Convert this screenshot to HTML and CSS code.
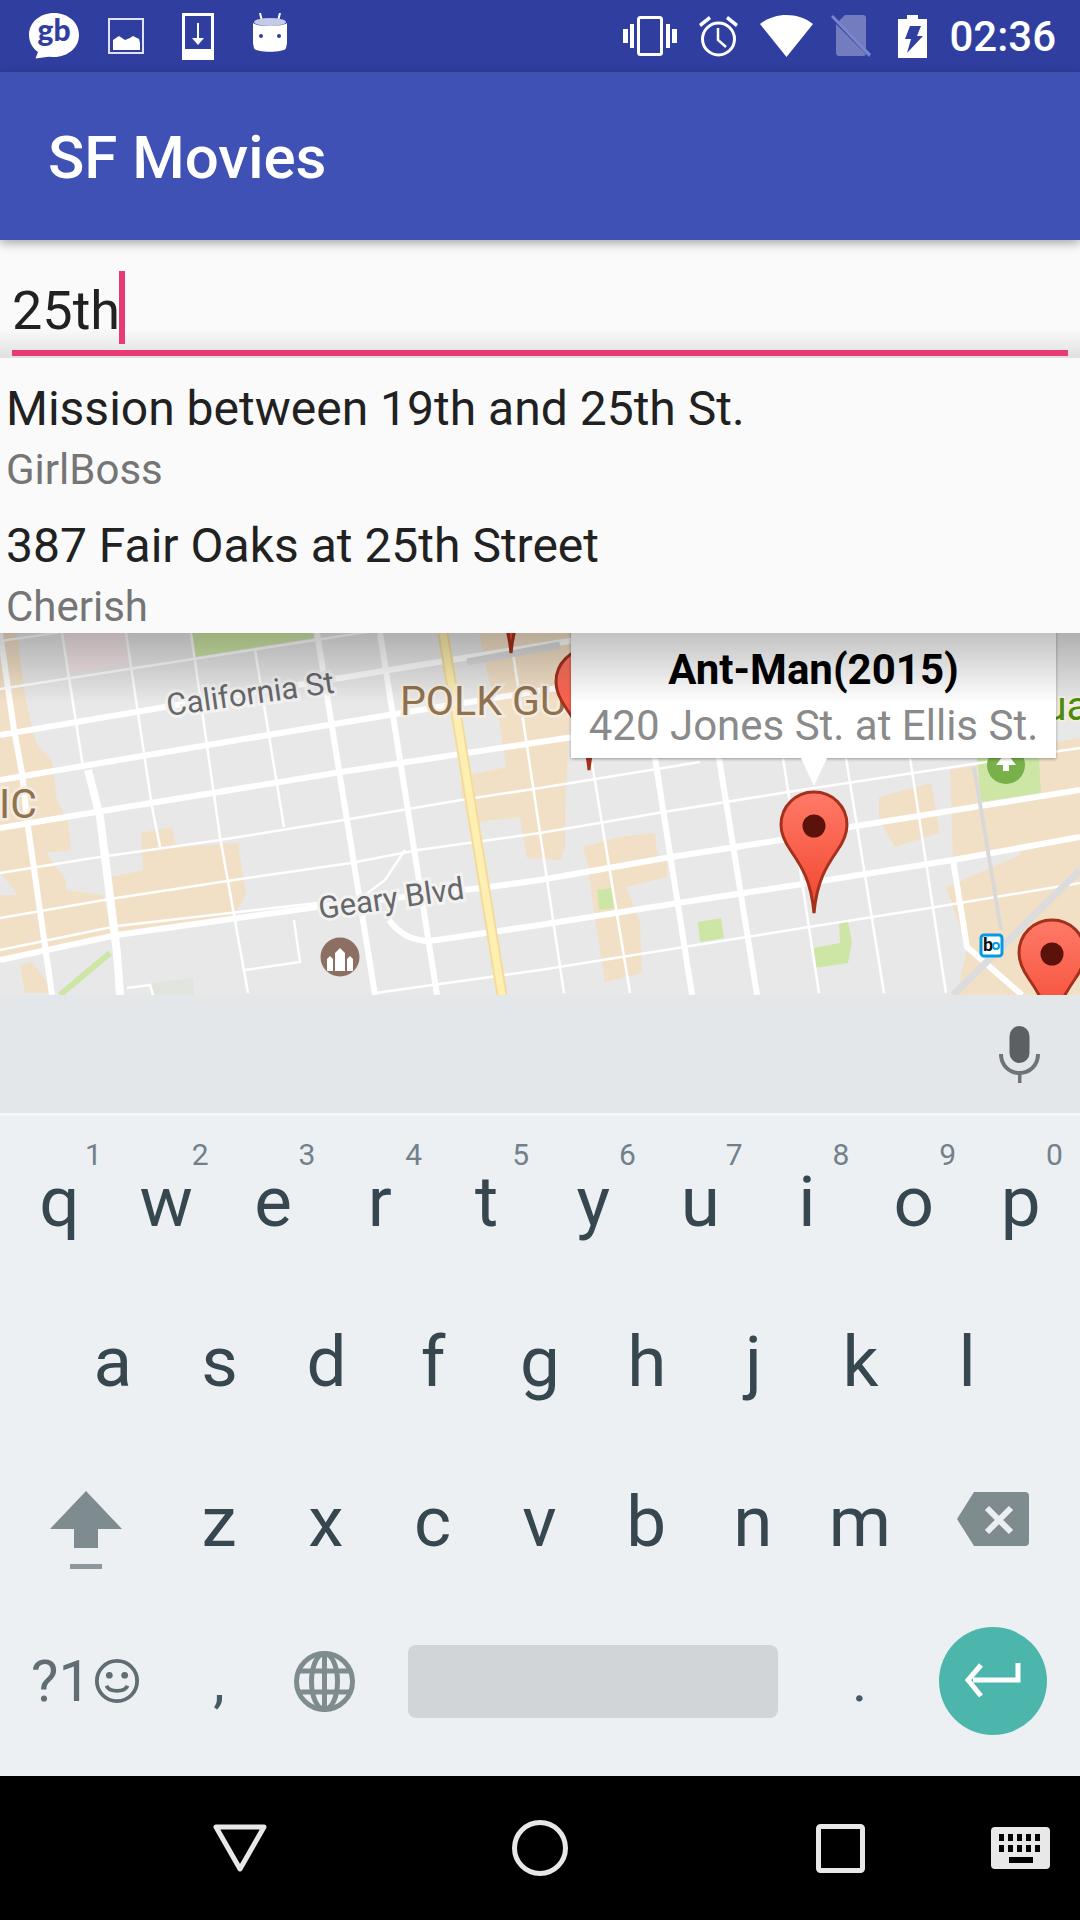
FILE: index.html
```html
<!DOCTYPE html>
<html>
	<head>
		<meta charset="utf-8">
		<title>SF Movies</title>
		<link rel="stylesheet" href="styles.css">
	</head>
	<body>
		<div class="status_bar">
			<div class="status_group">
				<svg class="ic_gb" viewBox="0 0 50 46"><path d="M25 0C11 0 0 9.500 0 22c0 7 3.500 13 9 17l-2.500 6.500C12 45 17 43.500 21 43.700c1.300.2 2.700.3 4 .3 14 0 25-9.500 25-22S39 0 25 0z" fill="#fff"/><text x="25" y="28" class="gb_text">gb</text></svg>
				<svg class="ic_pic" viewBox="0 0 36 36"><path d="M0 0h36v36H0z M2 2v32h32V2z" fill="#fff" fill-rule="evenodd" opacity=".85"/><path d="M5 32V22l6-4 6 4 5-2 3-2 6 3 1 4v7z" fill="#fff"/></svg>
				<svg class="ic_dl" viewBox="0 0 32 47"><path d="M0 0h32v47H0z M3 3v33h26V3z" fill="#fff" fill-rule="evenodd"/><path d="M15 10h2v17h-2z" fill="#fff"/><path d="M10 25h12l-6 7z" fill="#fff"/></svg>
				<svg class="ic_droid" viewBox="0 0 34 40"><path d="M7 0l2 8M27 0l-2 8" stroke="#fff" stroke-width="2" fill="none"/><ellipse cx="17" cy="9" rx="16" ry="4" fill="#c5cae9"/><path d="M0 10c4 4 30 4 34 0 1 9 1 18-1 25-1 5-31 5-32 0C-1 28-1 19 0 10z" fill="#fff"/><circle cx="8" cy="23" r="2" fill="#303f9f"/><circle cx="26" cy="23" r="2" fill="#303f9f"/></svg>
			</div>
			<div class="status_group">
				<svg class="ic_vib" viewBox="0 0 54 40"><rect x="15.500" y="1.500" width="23" height="37" rx="2" fill="none" stroke="#fff" stroke-width="3"/><path d="M0 13h5v14H0zM7 8h4v24H7zM43 8h4v24h-4zM49 13h5v14h-5z" fill="#fff"/></svg>
				<svg class="ic_alarm" viewBox="0 0 41 42"><circle cx="20.500" cy="24" r="16" fill="none" stroke="#fff" stroke-width="3"/><path d="M20 13v12l8 7" fill="none" stroke="#fff" stroke-width="2.500"/><path d="M1 9L11 1l2 3L3 12zM40 9L30 1l-2 3 10 8z" fill="#fff"/></svg>
				<svg class="ic_wifi" viewBox="0 0 53 42"><path d="M26.500 42L0 9C15 -3 38 -3 53 9z" fill="#fff"/></svg>
				<svg class="ic_sim" viewBox="0 0 40 42"><path d="M5 9v29a3 3 0 003 3h24a3 3 0 003-3V3a3 3 0 00-3-3H14z" fill="#fff" opacity=".32"/><path d="M1 3l38 38" stroke="#303f9f" stroke-width="3"/><path d="M0 2l2-2 38 39-2 3z" fill="#7986cb"/></svg>
				<svg class="ic_batt" viewBox="0 0 29 43"><path d="M9 0h11v4h9v39H0V4h9z" fill="#fff"/><path d="M12 11h11l-4 10h6L9 38l4-14H7z" fill="#303f9f"/></svg>
				<span class="clock">02:36</span>
			</div>
		</div>
		<div class="app_bar">SF Movies</div>
		<div class="search_field">
			<div class="search_line"><span>25th</span><i class="cursor"></i></div>
			<div class="underline"></div>
		</div>
		<div class="suggest">
			<div class="suggest_item">
				<div class="suggest_main">Mission between 19th and 25th St.</div>
				<div class="suggest_sub">GirlBoss</div>
			</div>
			<div class="suggest_item">
				<div class="suggest_main">387 Fair Oaks at 25th Street</div>
				<div class="suggest_sub">Cherish</div>
			</div>
		</div>
		<div class="map">
			<svg class="map_canvas" viewBox="0 633 1080 362">
				<defs>
					<linearGradient id="pin_fill" x1="0" y1="0" x2="0" y2="1">
						<stop offset="0" stop-color="#ff7a68"/>
						<stop offset="1" stop-color="#f2452d"/>
					</linearGradient>
					<g id="pin">
						<path d="M0 122C-3 90-12 76-23 60-30 50-33 43-33 34-33 15-18 1 0 1S33 15 33 34C33 43 30 50 23 60 12 76 3 90 0 122z" fill="url(#pin_fill)" stroke="#a5301c" stroke-width="3"/>
						<circle cx="0" cy="35" r="11.500" fill="#5a120a"/>
					</g>
				</defs>
				<g class="blocks">
					<path d="M0 633H17L24 690 30 720 37 745 52 760 57 800 68 822 71 850 46 853 66 880 66 890 103 895 112 935 45 950 0 958V895H18L6 880 0 872z"/>
					<path d="M0 780H5V870H0z"/>
					<path d="M141 833L172 827 176 847 238 843 246 895 234 915 117 932 110 877 143 870z"/>
					<path d="M20 965L32 962 55 993H25z"/>
					<path d="M479 633H560L600 633 570 720 562 860 527 858 520 817 479 822 461 797 461 777 506 767 499 720 486 667z"/>
					<path d="M540 745H565V850H540z"/>
					<path d="M583 847L619 837 655 833 657 853 667 862 667 877 626 887 640 922 642 973 605 982 595 920 588 867z"/>
					<path d="M879 797L931 783 939 827 939 833 895 847 879 820z"/>
					<path d="M950 770L977 765 982 802 1080 790V995H957L967 947 946 887 1020 855 1020 850 953 860z"/>
					<path d="M1039 745L1080 738V795L1041 795z"/>
				</g>
				<g class="parks">
					<path d="M190 633H313L314 638 195 657z"/>
					<path d="M977 757H1039L1041 793 981 802z"/>
					<path d="M597 890L611 888 614 908 599 910z"/>
					<path d="M698 922L721 918 724 938 700 942z"/>
					<path d="M814 948L840 943 839 922 848 922 852 942 848 963 815 968z"/>
				</g>
				<path d="M65 633H124L129 663 69 673z" fill="#f3e5e8"/>
				<path d="M152 983L193 978 194 995H152z" fill="#e2e4de"/>
				<path d="M110 953L60 995" class="green_path"/>
				<g class="thin">
					<path d="M0 641L62 632"/>
					<path d="M0 689L380 630"/>
					<path d="M0 873L93 858 220 840 344 820 461 800 540 788 700 762"/>
					<path d="M0 918L110 899 234 880 351 863 418 850 540 833 664 812 788 792 953 767 1080 748"/>
					<path d="M375 993L540 970 678 948 809 927 936 907 1080 883"/>
					<path d="M294 920L300 962 245 970"/>
					<path d="M62 633L83 767"/>
					<path d="M126 633L152 807 160 847"/>
					<path d="M191 633L220 837 248 993"/>
					<path d="M255 650L284 827"/>
					<path d="M513 653L564 993"/>
					<path d="M592 763L630 993"/>
					<path d="M783 758L819 993"/>
					<path d="M846 758L884 993"/>
					<path d="M910 758L946 993"/>
					<path d="M405 850L385 880 365 895"/>
					<path d="M127 988L150 985 153 995"/>
					<path d="M0 950L117 926 317 903"/>
				</g>
				<g class="major">
					<path d="M0 735L165 707 389 670 700 620"/>
					<path d="M0 780L148 755 389 715 700 665"/>
					<path d="M0 828L96 812 341 772 540 742 600 733"/>
					<path d="M0 960L117 935 317 907 489 887 540 880 671 857 781 840 850 827 1080 790"/>
					<path d="M389 920Q404 941 430 941L540 925 678 903 809 883 953 860 1080 837"/>
					<path d="M0 633L14 730 22 773 28 827 52 995"/>
					<path d="M317 633L375 995"/>
					<path d="M380 633L437 995"/>
					<path d="M655 758L692 995"/>
					<path d="M719 758L757 995"/>
					<path d="M953 860L967 947 1022 995"/>
				</g>
				<path d="M88 770L100 817 117 953 120 995" class="wide_road"/>
				<path d="M443 633L502 995" class="yellow_edge"/>
				<path d="M443 633L502 995" class="yellow_road"/>
				<path d="M974 767L1001 930" class="rail"/>
				<path d="M953 995L1080 870" class="rail_wide"/>
				<path d="M467 662L560 645" class="rail_wide"/>
				<text x="168" y="716" transform="rotate(-8 168 716)" class="road_label">California St</text>
				<text x="320" y="919" transform="rotate(-8 320 919)" class="road_label">Geary Blvd</text>
				<text x="400" y="715" class="area_label">POLK GUL</text>
				<text x="-1" y="818" class="area_label">IC</text>
				<text x="1044" y="720" class="park_label">ua</text>
				<use href="#pin" x="511" y="531"/>
				<use href="#pin" x="589" y="648"/>
				<circle cx="1006" cy="765" r="19" fill="#78b04a"/>
				<path d="M1006 752l10 13h-7v6h-6v-6h-7z" fill="#fff"/>
				<circle cx="340" cy="957" r="19.500" fill="#8d6e63"/>
				<path d="M327 971v-12l3-3 3 3v12zM335 971v-18l5-5 5 5v18zM347 971v-12l3-3 3 3v12z" fill="#fff"/>
				<rect x="981" y="935" width="21" height="21" rx="3" fill="#fff" stroke="#039be5" stroke-width="3"/>
				<text x="983" y="951" class="bart_label">b</text>
				<circle cx="996" cy="946" r="3" fill="none" stroke="#039be5" stroke-width="2"/>
				<use href="#pin" x="814" y="791"/>
				<use href="#pin" x="1052" y="919"/>
			</svg>
			<div class="info_win">
				<div class="info_title">Ant-Man(2015)</div>
				<div class="info_body">420 Jones St. at Ellis St.</div>
				<i class="info_tail"></i>
			</div>
			<div class="map_shade"></div>
		</div>
		<div class="keyboard">
			<div class="kb_strip">
				<svg class="ic_mic" viewBox="0 0 41 57"><rect x="10.500" y="0" width="20" height="37" rx="10" fill="#5d6063"/><path d="M2 28c0 11 8 19 18.500 19S39 39 39 28" fill="none" stroke="#6c757a" stroke-width="4"/><path d="M19 46h3.500v11H19z" fill="#6c757a"/></svg>
			</div>
			<div class="kb_rows">
				<div class="kb_row">
					<span class="key">q<sup>1</sup></span>
					<span class="key">w<sup>2</sup></span>
					<span class="key">e<sup>3</sup></span>
					<span class="key">r<sup>4</sup></span>
					<span class="key">t<sup>5</sup></span>
					<span class="key">y<sup>6</sup></span>
					<span class="key">u<sup>7</sup></span>
					<span class="key">i<sup>8</sup></span>
					<span class="key">o<sup>9</sup></span>
					<span class="key">p<sup>0</sup></span>
				</div>
				<div class="kb_row">
					<span class="key">a</span>
					<span class="key">s</span>
					<span class="key">d</span>
					<span class="key">f</span>
					<span class="key">g</span>
					<span class="key">h</span>
					<span class="key">j</span>
					<span class="key">k</span>
					<span class="key">l</span>
				</div>
				<div class="kb_row kb_row_start">
					<span class="key key_wide">
						<svg class="ic_shift" viewBox="0 0 72 78"><path d="M36 0L72 38H48V57H24V38H0z" fill="#7f8c8f"/><path d="M20 73h32v5H20z" fill="#8c999c"/></svg>
					</span>
					<span class="key">z</span>
					<span class="key">x</span>
					<span class="key">c</span>
					<span class="key">v</span>
					<span class="key">b</span>
					<span class="key">n</span>
					<span class="key">m</span>
					<span class="key key_wide">
						<svg class="ic_back" viewBox="0 0 72 54"><path d="M17 0H68a4 4 0 014 4V50a4 4 0 01-4 4H17L0 27z" fill="#7f8c8f"/><path d="M30 16l24 24M54 16L30 40" stroke="#eceff1" stroke-width="6" fill="none"/></svg>
					</span>
				</div>
				<div class="kb_row kb_row_start">
					<span class="key key_wide key_sym">?1<svg class="ic_smile" viewBox="0 0 48 48"><circle cx="24" cy="24" r="21" fill="none" stroke="#606d73" stroke-width="4"/><circle cx="16" cy="18" r="3.500" fill="#606d73"/><circle cx="32" cy="18" r="3.500" fill="#606d73"/><path d="M13 29c3 7 19 7 22 0" fill="none" stroke="#606d73" stroke-width="4"/></svg></span>
					<span class="key key_punct">,</span>
					<span class="key">
						<svg class="ic_globe" viewBox="0 0 61 61"><g fill="none" stroke="#7f8c8f" stroke-width="5"><circle cx="30.500" cy="30.500" r="28"/><ellipse cx="30.500" cy="30.500" rx="13" ry="28"/><path d="M5 20h51M5 41h51M30.500 2v57"/></g></svg>
					</span>
					<span class="key key_space"><i class="space_bar"></i></span>
					<span class="key key_punct">.</span>
					<span class="key key_wide">
						<i class="enter_btn"><svg class="ic_enter" viewBox="0 0 56 36"><path d="M53 0v17H8" fill="none" stroke="#fff" stroke-width="5"/><path d="M16 2L3 17l13 16" fill="none" stroke="#fff" stroke-width="5"/></svg></i>
					</span>
				</div>
			</div>
		</div>
		<div class="nav_bar">
			<svg class="ic_nav_back" viewBox="0 0 54 48"><path d="M3 3H51L27 45z" fill="none" stroke="#e8e8e8" stroke-width="5" stroke-linejoin="round"/></svg>
			<svg class="ic_nav_home" viewBox="0 0 56 56"><circle cx="28" cy="28" r="25.500" fill="none" stroke="#e8e8e8" stroke-width="5"/></svg>
			<svg class="ic_nav_recent" viewBox="0 0 49 49"><rect x="2.500" y="2.500" width="44" height="44" rx="2" fill="none" stroke="#e8e8e8" stroke-width="5"/></svg>
			<svg class="ic_nav_kbd" viewBox="0 0 59 42"><rect width="59" height="42" rx="4" fill="#e8e8e8"/><path d="M8 7h5v7H8zM17 7h5v7h-5zM26 7h5v7h-5zM35 7h5v7h-5zM44 7h5v7h-5zM8 18h5v7H8zM17 18h5v7h-5zM26 18h5v7h-5zM35 18h5v7h-5zM44 18h5v7h-5zM18 30h24v6H18z" fill="#000"/></svg>
		</div>
	</body>
</html>
```

FILE: styles.css
```css
body {
    margin: 0;
    width: 1080px;
    height: 1920px;
    overflow: hidden;
    display: flex;
    flex-direction: column;
    font-family: Roboto, "Liberation Sans", sans-serif;
    background: #fafafa;
}
svg {
    display: block;
    flex: none;
}

/* status bar */
.status_bar {
    height: 72px;
    flex: none;
    background: #303f9f;
    display: flex;
    align-items: center;
    justify-content: space-between;
    padding: 0 24px 0 29px;
    box-sizing: border-box;
}
.status_group {
    display: flex;
    align-items: center;
}
.ic_gb { width: 50px; height: 46px; margin-right: 29px; }
.ic_pic { width: 36px; height: 36px; margin-right: 38px; }
.ic_dl { width: 32px; height: 47px; margin-right: 39px; }
.ic_droid { width: 34px; height: 40px; margin-top: -6px; }
.gb_text {
    font-family: Lato, sans-serif;
    font-size: 30px;
    font-weight: 900;
    fill: #303f9f;
    text-anchor: middle;
}
.ic_vib { width: 54px; height: 40px; margin-right: 21px; }
.ic_alarm { width: 41px; height: 42px; margin-right: 21px; }
.ic_wifi { width: 53px; height: 42px; margin-right: 18px; }
.ic_sim { width: 40px; height: 42px; margin-right: 27px; }
.ic_batt { width: 29px; height: 43px; margin-right: 22px; }
.clock {
    color: #fff;
    font-size: 42px;
    font-weight: 500;
}

/* app bar */
.app_bar {
    height: 168px;
    flex: none;
    background: #3f51b5;
    color: #fff;
    font-size: 60px;
    font-weight: 500;
    display: flex;
    align-items: center;
    padding: 2px 0 0 48px;
    box-sizing: border-box;
    box-shadow: 0 3px 10px rgba(0,0,0,.35);
    position: relative;
    z-index: 2;
}

/* search field */
.search_field {
    height: 118px;
    flex: none;
    box-sizing: border-box;
    padding: 31px 12px 2px;
    background: linear-gradient(#fafafa 75%, #e0e0e0);
}
.search_line {
    height: 73px;
    display: flex;
    color: #212121;
    font-size: 54px;
    line-height: 80px;
}
.cursor {
    width: 6px;
    height: 73px;
    margin-left: -1px;
    background: #e73a77;
}
.underline {
    height: 6px;
    margin-top: 6px;
    background: #e73a77;
}

/* dropdown */
.suggest {
    height: 275px;
    flex: none;
    background: #fafafa;
    border-radius: 6px;
    padding: 13px 6px 0;
    box-sizing: border-box;
    position: relative;
    z-index: 3;
}
.suggest_item {
    height: 137px;
}
.suggest_main {
    color: #212121;
    font-size: 48px;
    line-height: 76px;
}
.suggest_sub {
    color: #757575;
    font-size: 42px;
    line-height: 46px;
}

/* map */
.map {
    height: 362px;
    flex: none;
    position: relative;
    overflow: hidden;
    background: #e8e8e8;
}
.map_canvas {
    width: 1080px;
    height: 362px;
}
.blocks path { fill: #f2e0c6; }
.parks path { fill: #cde6a5; }
.thin path { fill: none; stroke: #fff; stroke-width: 2.500; }
.major path { fill: none; stroke: #fff; stroke-width: 6; }
.wide_road { fill: none; stroke: #fff; stroke-width: 8; }
.green_path { fill: none; stroke: #cde6a5; stroke-width: 6; }
.yellow_edge { fill: none; stroke: #f3dc9b; stroke-width: 11; }
.yellow_road { fill: none; stroke: #ffefb0; stroke-width: 7; }
.rail { fill: none; stroke: #d9d9d9; stroke-width: 4; }
.rail_wide { fill: none; stroke: #dcdcdc; stroke-width: 7; }
.road_label {
    font-size: 31px;
    fill: #68686a;
    stroke: #f2f2f2;
    stroke-width: 6px;
    paint-order: stroke;
}
.area_label {
    font-size: 41px;
    fill: #8f7250;
    stroke: #f4ece0;
    stroke-width: 5px;
    paint-order: stroke;
}
.park_label {
    font-size: 41px;
    fill: #4a8c0b;
    stroke: #f4ece0;
    stroke-width: 4px;
    paint-order: stroke;
}
.bart_label {
    font-size: 18px;
    font-weight: 700;
    fill: #111;
}
.info_win {
    position: absolute;
    left: 571px;
    top: -30px;
    width: 485px;
    height: 155px;
    background: #fff;
    box-shadow: 0 1px 3px rgba(0,0,0,.35);
    text-align: center;
}
.info_title {
    margin-top: 38px;
    color: #000;
    font-size: 42px;
    font-weight: 700;
    line-height: 57px;
}
.info_body {
    color: #8a8a8a;
    font-size: 42px;
    line-height: 56px;
}
.info_tail {
    position: absolute;
    left: 230px;
    top: 155px;
    width: 0;
    height: 0;
    border-left: 13px solid transparent;
    border-right: 13px solid transparent;
    border-top: 28px solid #fff;
}
.map_shade {
    position: absolute;
    left: 0;
    top: 0;
    width: 100%;
    height: 70px;
    background: linear-gradient(rgba(0,0,0,.24), rgba(0,0,0,0));
}

/* keyboard */
.keyboard {
    height: 781px;
    flex: none;
    background: #ecf0f3;
    display: flex;
    flex-direction: column;
}
.kb_strip {
    height: 121px;
    flex: none;
    background: #e3e7ea;
    border-bottom: 3px solid #f5f7f8;
    display: flex;
    justify-content: flex-end;
    padding: 31px 40px 0 0;
    box-sizing: border-box;
}
.ic_mic { width: 41px; height: 57px; }
.kb_rows {
    flex: 1;
    display: flex;
    flex-direction: column;
    padding: 5px 5.600px 0;
}
.kb_row {
    height: 160px;
    display: flex;
    justify-content: center;
}
.kb_row_start {
    justify-content: flex-start;
}
.key {
    width: 106.800px;
    flex: none;
    position: relative;
    display: flex;
    align-items: center;
    justify-content: center;
    color: #37474f;
    font-size: 71px;
}
.key sup {
    position: absolute;
    top: 16px;
    right: 11px;
    color: #73808a;
    font-size: 30px;
    line-height: 36px;
}
.key_wide { width: 160px; }
.key_sym {
    color: #606d73;
    font-size: 58px;
}
.ic_smile { width: 46px; height: 46px; margin-left: 3px; }
.ic_shift { width: 72px; height: 78px; margin-top: 17px; }
.ic_back { width: 72px; height: 54px; margin-top: -4px; }
.ic_globe { width: 61px; height: 61px; margin-left: -2px; }
.key_punct { color: #455a64; font-size: 58px; }
.key_space { width: 427px; }
.space_bar {
    width: 370px;
    height: 73px;
    background: #d1d5d8;
    border-radius: 8px;
}
.enter_btn {
    width: 108px;
    height: 108px;
    border-radius: 50%;
    background: #4db6ac;
    display: flex;
    align-items: center;
    justify-content: center;
}
.ic_enter { width: 56px; height: 36px; }

/* nav bar */
.nav_bar {
    height: 144px;
    flex: none;
    background: #000;
    display: flex;
    align-items: center;
}
.ic_nav_back { width: 54px; height: 48px; margin-left: 213px; }
.ic_nav_home { width: 56px; height: 56px; margin-left: 245px; }
.ic_nav_recent { width: 49px; height: 49px; margin-left: 248px; }
.ic_nav_kbd { width: 59px; height: 42px; margin-left: 126px; }
```
